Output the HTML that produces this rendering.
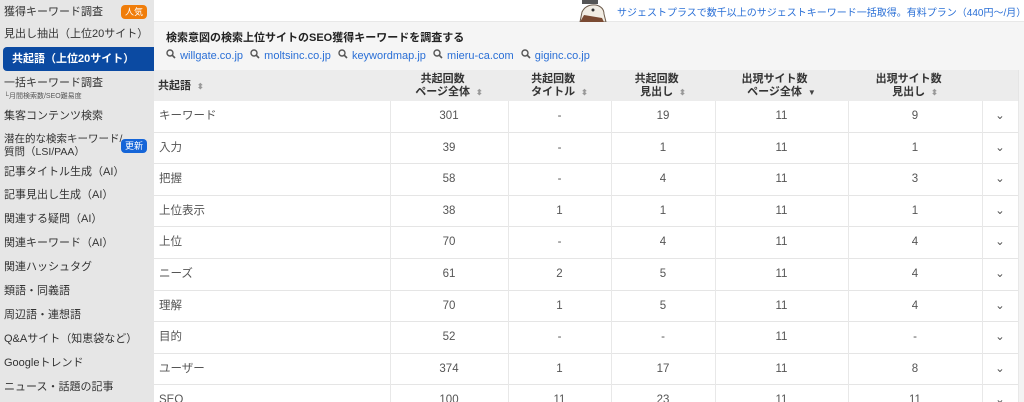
<!DOCTYPE html>
<html><head><meta charset="utf-8">
<style>
*{margin:0;padding:0;box-sizing:border-box}
html,body{width:1024px;height:402px;overflow:hidden}
body{background:#fff;font-family:"Liberation Sans","Noto Sans CJK JP",sans-serif;color:#333;position:relative}
.sb{position:absolute;left:0;top:0;width:154px;height:402px;background:#e6e6e6}
.it{position:absolute;left:4px;font-size:11px;color:#333;white-space:nowrap;line-height:14px}
.badge{position:absolute;font-size:9px;color:#fff;border-radius:4px;padding:1px 4px;line-height:12px}
.act{position:absolute;left:3px;top:47px;width:152px;height:24px;background:#0b4aa2;border-radius:4px 0 0 4px;color:#fff;font-size:11px;font-weight:bold;line-height:24px;padding-left:9px;white-space:nowrap}
.top{position:absolute;left:154px;top:0;width:870px;height:22px;background:#fff;border-bottom:1px solid #e8e8e8}
.panel{position:absolute;left:154px;top:22px;width:870px;height:48px;background:#f5f5f5}
.ttl{position:absolute;left:166px;top:29px;font-size:11px;font-weight:bold;color:#222;white-space:nowrap}
.links{position:absolute;left:166px;top:49px;font-size:11px;color:#2a6fd6;white-space:nowrap}
.links span{margin-right:4px}
.links svg{margin-right:1px}
.hdr{position:absolute;left:154px;top:70px;width:864px;height:31px;background:#ececec}
.hc{position:absolute;top:73px;font-size:11px;font-weight:bold;color:#333;text-align:center;line-height:13px;white-space:nowrap}
.s{color:#999;font-size:8px;margin-left:6px}
.row{position:absolute;left:154px;width:864px;height:31.6px;border-bottom:1px solid #e5e5e5}
.c{position:absolute;font-size:11.5px;color:#555;text-align:center;line-height:31px;white-space:nowrap}
.vl{position:absolute;top:101px;height:301px;width:1px;background:#e8e8e8}
.rgt{position:absolute;left:1018px;top:70px;width:6px;height:332px;background:#f3f3f3;border-left:1px solid #e5e5e5}
</style></head><body>
<div class="sb"></div>
<div class="it" style="top:5px">獲得キーワード調査</div>
<div class="badge" style="left:121px;top:5px;background:#f07d0a">人気</div>
<div class="it" style="top:27px">見出し抽出（上位20サイト）</div>
<div class="act">共起語（上位20サイト）</div>
<div class="it" style="top:76px">一括キーワード調査</div>
<div class="it" style="top:90px;font-size:7px;color:#555">└月間検索数/SEO難易度</div>
<div class="it" style="top:109px">集客コンテンツ検索</div>
<div class="it" style="top:133px;line-height:13px;font-size:10.5px">潜在的な検索キーワード/<br>質問（LSI/PAA）</div>
<div class="badge" style="left:121px;top:139px;background:#1565d8">更新</div>
<div class="it" style="top:165px">記事タイトル生成（AI）</div>
<div class="it" style="top:188px">記事見出し生成（AI）</div>
<div class="it" style="top:212px">関連する疑問（AI）</div>
<div class="it" style="top:236px">関連キーワード（AI）</div>
<div class="it" style="top:260px">関連ハッシュタグ</div>
<div class="it" style="top:284px">類語・同義語</div>
<div class="it" style="top:308px">周辺語・連想語</div>
<div class="it" style="top:332px">Q&amp;Aサイト（知恵袋など）</div>
<div class="it" style="top:356px">Googleトレンド</div>
<div class="it" style="top:380px">ニュース・話題の記事</div>

<div class="top"></div>
<svg style="position:absolute;left:576px;top:0" width="32" height="22" viewBox="0 0 32 22"><path d="M4 22 L6 12 Q10 4 20 5 Q28 7 28 14 L30 22Z" fill="#f2ede4" stroke="#6b5a4a" stroke-width="1"/><rect x="6" y="0" width="16" height="4" fill="#555"/><path d="M4 22 L8 15 L26 18 L28 22Z" fill="#7a4a32"/><circle cx="17" cy="10" r="1.5" fill="#333"/></svg>
<div style="position:absolute;left:617px;top:4px;font-size:10px;color:#2a6fd6;white-space:nowrap">サジェストプラスで数千以上のサジェストキーワード一括取得。有料プラン（440円～/月）</div>
<div class="panel"></div>
<div class="ttl">検索意図の検索上位サイトのSEO獲得キーワードを調査する</div>
<div class="links">
<svg width="10" height="10" viewBox="0 0 10 10"><circle cx="4" cy="4" r="3" fill="none" stroke="#555" stroke-width="1.4"/><path d="M6.2 6.2L9 9" stroke="#555" stroke-width="1.6"/></svg> <span>willgate.co.jp</span>
<svg width="10" height="10" viewBox="0 0 10 10"><circle cx="4" cy="4" r="3" fill="none" stroke="#555" stroke-width="1.4"/><path d="M6.2 6.2L9 9" stroke="#555" stroke-width="1.6"/></svg> <span>moltsinc.co.jp</span>
<svg width="10" height="10" viewBox="0 0 10 10"><circle cx="4" cy="4" r="3" fill="none" stroke="#555" stroke-width="1.4"/><path d="M6.2 6.2L9 9" stroke="#555" stroke-width="1.6"/></svg> <span>keywordmap.jp</span>
<svg width="10" height="10" viewBox="0 0 10 10"><circle cx="4" cy="4" r="3" fill="none" stroke="#555" stroke-width="1.4"/><path d="M6.2 6.2L9 9" stroke="#555" stroke-width="1.6"/></svg> <span>mieru-ca.com</span>
<svg width="10" height="10" viewBox="0 0 10 10"><circle cx="4" cy="4" r="3" fill="none" stroke="#555" stroke-width="1.4"/><path d="M6.2 6.2L9 9" stroke="#555" stroke-width="1.6"/></svg> <span>giginc.co.jp</span>
</div>

<div class="hdr"></div>
<div class="hc" style="left:158px;top:80px">共起語<span class="s">⬍</span></div>
<div class="hc" style="left:390px;width:118px">共起回数<span class="s" style="visibility:hidden">⬍</span><br>ページ全体<span class="s">⬍</span></div>
<div class="hc" style="left:508px;width:103px">共起回数<span class="s" style="visibility:hidden">⬍</span><br>タイトル<span class="s">⬍</span></div>
<div class="hc" style="left:611px;width:104px">共起回数<span class="s" style="visibility:hidden">⬍</span><br>見出し<span class="s">⬍</span></div>
<div class="hc" style="left:715px;width:133px">出現サイト数<span class="s" style="visibility:hidden">▼</span><br>ページ全体<span class="s" style="color:#444">▼</span></div>
<div class="hc" style="left:848px;width:134px">出現サイト数<span class="s" style="visibility:hidden">⬍</span><br>見出し<span class="s">⬍</span></div>
<div class="rgt"></div>

<div class="row" style="top:101px"></div><div class="row" style="top:132.6px"></div><div class="row" style="top:164.2px"></div><div class="row" style="top:195.8px"></div><div class="row" style="top:227.4px"></div><div class="row" style="top:259px"></div><div class="row" style="top:290.6px"></div><div class="row" style="top:322.2px"></div><div class="row" style="top:353.8px"></div><div class="row" style="top:385.4px"></div>
<div class="vl" style="left:390px"></div><div class="vl" style="left:508px"></div><div class="vl" style="left:611px"></div><div class="vl" style="left:715px"></div><div class="vl" style="left:848px"></div><div class="vl" style="left:982px"></div><div class="vl" style="left:1018px"></div>

<div style="position:absolute;left:0;top:101px;width:1024px;height:301px">
<div class="c" style="left:159px;top:0;text-align:left">キーワード</div><div class="c" style="left:390px;width:118px;top:0">301</div><div class="c" style="left:508px;width:103px;top:0">-</div><div class="c" style="left:611px;width:104px;top:0">19</div><div class="c" style="left:715px;width:133px;top:0">11</div><div class="c" style="left:848px;width:134px;top:0">9</div><div class="c" style="left:982px;width:36px;top:0">⌄</div>
<div class="c" style="left:159px;top:31.6px;text-align:left">入力</div><div class="c" style="left:390px;width:118px;top:31.6px">39</div><div class="c" style="left:508px;width:103px;top:31.6px">-</div><div class="c" style="left:611px;width:104px;top:31.6px">1</div><div class="c" style="left:715px;width:133px;top:31.6px">11</div><div class="c" style="left:848px;width:134px;top:31.6px">1</div><div class="c" style="left:982px;width:36px;top:31.6px">⌄</div>
<div class="c" style="left:159px;top:63.2px;text-align:left">把握</div><div class="c" style="left:390px;width:118px;top:63.2px">58</div><div class="c" style="left:508px;width:103px;top:63.2px">-</div><div class="c" style="left:611px;width:104px;top:63.2px">4</div><div class="c" style="left:715px;width:133px;top:63.2px">11</div><div class="c" style="left:848px;width:134px;top:63.2px">3</div><div class="c" style="left:982px;width:36px;top:63.2px">⌄</div>
<div class="c" style="left:159px;top:94.8px;text-align:left">上位表示</div><div class="c" style="left:390px;width:118px;top:94.8px">38</div><div class="c" style="left:508px;width:103px;top:94.8px">1</div><div class="c" style="left:611px;width:104px;top:94.8px">1</div><div class="c" style="left:715px;width:133px;top:94.8px">11</div><div class="c" style="left:848px;width:134px;top:94.8px">1</div><div class="c" style="left:982px;width:36px;top:94.8px">⌄</div>
<div class="c" style="left:159px;top:126.4px;text-align:left">上位</div><div class="c" style="left:390px;width:118px;top:126.4px">70</div><div class="c" style="left:508px;width:103px;top:126.4px">-</div><div class="c" style="left:611px;width:104px;top:126.4px">4</div><div class="c" style="left:715px;width:133px;top:126.4px">11</div><div class="c" style="left:848px;width:134px;top:126.4px">4</div><div class="c" style="left:982px;width:36px;top:126.4px">⌄</div>
<div class="c" style="left:159px;top:158px;text-align:left">ニーズ</div><div class="c" style="left:390px;width:118px;top:158px">61</div><div class="c" style="left:508px;width:103px;top:158px">2</div><div class="c" style="left:611px;width:104px;top:158px">5</div><div class="c" style="left:715px;width:133px;top:158px">11</div><div class="c" style="left:848px;width:134px;top:158px">4</div><div class="c" style="left:982px;width:36px;top:158px">⌄</div>
<div class="c" style="left:159px;top:189.6px;text-align:left">理解</div><div class="c" style="left:390px;width:118px;top:189.6px">70</div><div class="c" style="left:508px;width:103px;top:189.6px">1</div><div class="c" style="left:611px;width:104px;top:189.6px">5</div><div class="c" style="left:715px;width:133px;top:189.6px">11</div><div class="c" style="left:848px;width:134px;top:189.6px">4</div><div class="c" style="left:982px;width:36px;top:189.6px">⌄</div>
<div class="c" style="left:159px;top:221.2px;text-align:left">目的</div><div class="c" style="left:390px;width:118px;top:221.2px">52</div><div class="c" style="left:508px;width:103px;top:221.2px">-</div><div class="c" style="left:611px;width:104px;top:221.2px">-</div><div class="c" style="left:715px;width:133px;top:221.2px">11</div><div class="c" style="left:848px;width:134px;top:221.2px">-</div><div class="c" style="left:982px;width:36px;top:221.2px">⌄</div>
<div class="c" style="left:159px;top:252.8px;text-align:left">ユーザー</div><div class="c" style="left:390px;width:118px;top:252.8px">374</div><div class="c" style="left:508px;width:103px;top:252.8px">1</div><div class="c" style="left:611px;width:104px;top:252.8px">17</div><div class="c" style="left:715px;width:133px;top:252.8px">11</div><div class="c" style="left:848px;width:134px;top:252.8px">8</div><div class="c" style="left:982px;width:36px;top:252.8px">⌄</div>
<div class="c" style="left:159px;top:284.4px;text-align:left">SEO</div><div class="c" style="left:390px;width:118px;top:284.4px">100</div><div class="c" style="left:508px;width:103px;top:284.4px">11</div><div class="c" style="left:611px;width:104px;top:284.4px">23</div><div class="c" style="left:715px;width:133px;top:284.4px">11</div><div class="c" style="left:848px;width:134px;top:284.4px">11</div><div class="c" style="left:982px;width:36px;top:284.4px">⌄</div>
</div>
</body></html>
